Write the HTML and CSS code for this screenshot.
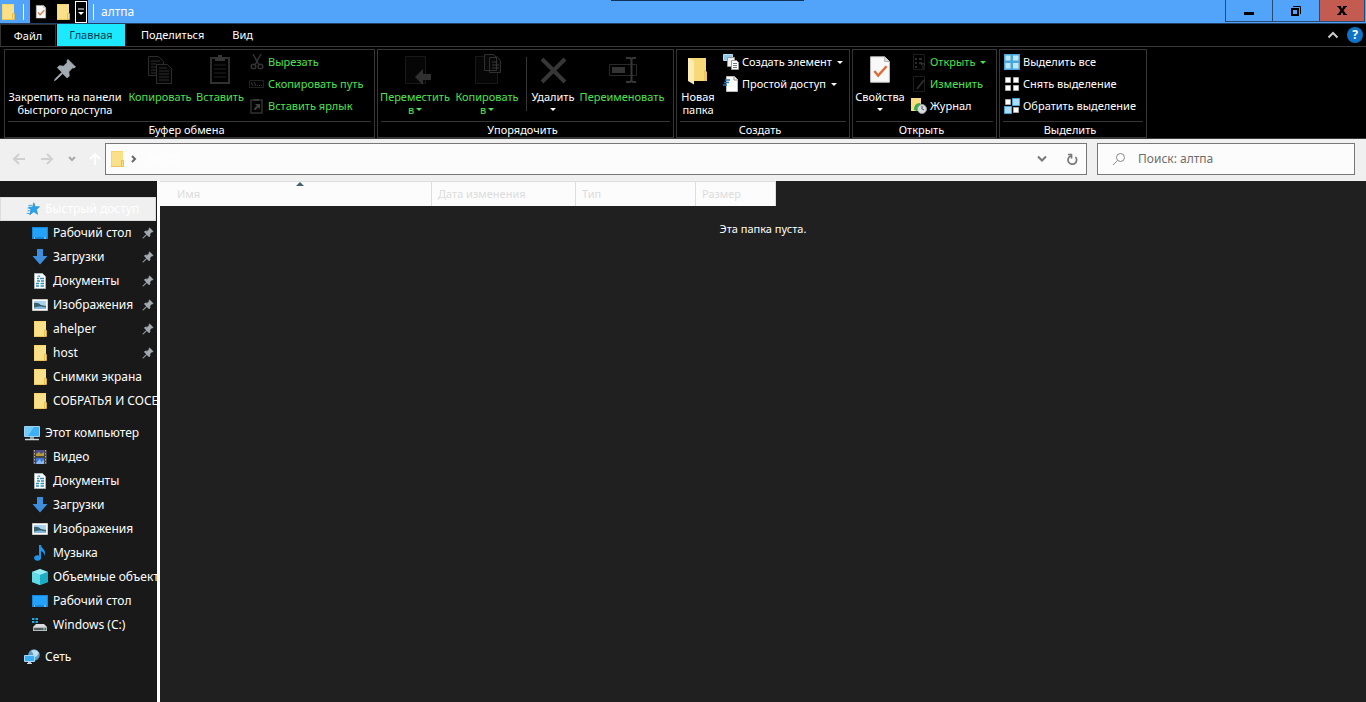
FILE: index.html
```html
<!DOCTYPE html>
<html lang="ru">
<head>
<meta charset="utf-8">
<title>алтпа</title>
<link rel="stylesheet" href="styles.css">
</head>
<body>
<svg class="sprite" aria-hidden="true">
  <symbol id="folder" viewBox="0 0 16 16"><path d="M2 0h12v15H2z" fill="#fbe08a"/><path d="M2 0h12v1H3v15H2z" fill="#f7d46c"/><path d="M12.500 9.500h2v6h-2z" fill="#fbe08a" stroke="#e0b53c" stroke-width=".8"/><path d="M2 15h11v1H2z" fill="#edc659"/></symbol>
  <symbol id="pin" viewBox="0 0 16 16"><path d="M10 1l5 5-1.300.700-.700-.200-2.500 2.700.300 2.800-1.300 1.300-3-3L2 14.500 1 15l.500-1L6 9.500l-3-3L4.300 5.200l2.700.300L9.500 3 9.300 2z" fill="#a3abb2" stroke="#a3abb2" stroke-width=".6"/></symbol>
  <symbol id="checkdoc" viewBox="-1 -1 26 34"><path d="M2 2h15l5 5v22H2z" fill="#f8f8f8" stroke="#c9c9c9"/><path d="M17 2v5h5" fill="#ddd" stroke="#a9a9a9"/><path d="M6 17l4 5 9-10" fill="none" stroke="#dc6b35" stroke-width="2.500"/></symbol>
  <symbol id="doc" viewBox="0 0 16 16"><path d="M2.500.500h8l3 3v12h-11z" fill="#fff" stroke="#a9b3b8"/><path d="M5 5.500h2M8 5.500h4M5 8h3M9 8h3M4 10.500h3M8.500 10.500H12M4 13h3M8.500 13H12" stroke="#2c8fc0" stroke-width="1.300"/><path d="M5.500 4L7 2.500 8 4" stroke="#2c8fc0" fill="none"/></symbol>
  <symbol id="down" viewBox="0 0 16 16"><path d="M5 0h6v7h4.500L8 15.500.500 7H5z" fill="#3d8fdd"/></symbol>
  <symbol id="desktop" viewBox="0 0 16 16"><path d="M0 2h16v12H0z" fill="#1588dd"/><path d="M1 3h14v9H1z" fill="#22a2fa"/><path d="M2 13h1M12 13h2" stroke="#bfe3ff"/></symbol>
  <symbol id="image" viewBox="0 0 16 16"><path d="M.500 2.500h15v11H.500z" fill="#fff" stroke="#c8c8c8"/><path d="M2 4h12v8H2z" fill="#a9d3ee"/><path d="M2 6q4-1 7 2l5 1v3H2z" fill="#33616e"/><path d="M2 10.500q6-2 12 0V12H2z" fill="#86b7d6"/></symbol>
  <symbol id="pc" viewBox="0 0 16 16"><path d="M.500 1.500h15v10H.500z" fill="#3fb0f2" stroke="#9fd2ee"/><path d="M1 2h9l-6 9H1z" fill="#70ccfa"/><path d="M6 12h4v2H6z" fill="#8b9ba5"/><path d="M1 14.500h14" stroke="#ccd5da" stroke-width="1.500"/></symbol>
  <symbol id="video" viewBox="0 0 16 16"><path d="M1 1h14v14H1z" fill="#444"/><path d="M2.500 1v14M13.500 1v14" stroke="#aaa" stroke-dasharray="1.500 1.500"/><path d="M4 1h8v6H4z" fill="#4e4d8a"/><path d="M4 5l3-2 2 2 3-2v4H4z" fill="#b89b39"/><path d="M4 9h8v6H4z" fill="#3c77d8"/><path d="M5 13l3-3 1 3 3-2v4H4z" fill="#8eb7ef"/></symbol>
  <symbol id="music" viewBox="0 0 16 16"><path d="M7 0h2c0 3 4 4 4 8 0 1-.500 2-1 3 .500-3-1-4-3-5v6.500A3.500 2.800 0 1 1 7 10.500z" fill="#2196e8"/></symbol>
  <symbol id="cube" viewBox="0 0 16 16"><path d="M8 0l8 3v10l-8 3-8-3V3z" fill="#2fc3d6"/><path d="M0 3l8-3 8 3-8 3z" fill="#9aeaf2"/><path d="M8 6l8-3v10l-8 3z" fill="#1badc4"/><path d="M0 3l8 3v10l-8-3z" fill="#62d9e6"/></symbol>
  <symbol id="drive" viewBox="0 0 16 16"><path d="M0 1h2.500v2H0zM3.500 1H6v2H3.500zM0 4h2.500v2H0zM3.500 4H6v2H3.500z" fill="#1ea7dc"/><path d="M4 7h8l3 3H1z" fill="#d9dde0"/><path d="M1 10h14v4H1z" fill="#b4bbc0"/><path d="M2 11h12v2H2z" fill="#555c60"/><path d="M11 12h2" stroke="#7cef7c"/></symbol>
  <symbol id="net" viewBox="0 0 16 16"><circle cx="10" cy="6" r="5.800" fill="#5b9cc5"/><path d="M7 2q3 2 2 5l3 1 3-4q-3-5-8-2" fill="#c3dfed"/><path d="M.500 6.500h10v6H.500z" fill="#39adf2" stroke="#a5d9f6"/><path d="M4.500 13h2v1.500h-2zM3 14.500h5" fill="#9ab" stroke="#cbd5da"/></symbol>
  <symbol id="star" viewBox="-1 -1 18 18"><path d="M10 1l1.600 4.500H16.500L13 8.700 14.300 14 10 11 5.500 14.500 7 9 4 6h4.500z" fill="#2ba3ec" stroke="#1b82c9" stroke-width=".7"/><path d="M4 4h4M3 7h4M3 10h4M2 13h4" stroke="#2ba3ec"/></symbol>
  <symbol id="copy" viewBox="0 0 32 32"><path d="M4.500 2.500h10l5 5v14h-15z" fill="#050505" stroke="#2c2c2c"/><path d="M7 7h9M7 10h5M7 13h5M7 16h5M7 19h5" stroke="#2c2c2c"/><path d="M12.500 10.500h11l4 4v15h-15z" fill="#050505" stroke="#2c2c2c"/><path d="M15 14h8M15 17h10M15 20h10M15 23h10M15 26h10" stroke="#2c2c2c"/></symbol>
  <symbol id="paste" viewBox="0 0 32 32"><path d="M7 4h18v25H7z" fill="none" stroke="#303030" stroke-width="2"/><path d="M11 3h3V1h4v2h3v4H11z" fill="#363636"/><path d="M10 11h12M10 15h12M10 19h12M10 23h12" stroke="#222"/></symbol>
  <symbol id="cut" viewBox="0 0 16 16"><path d="M4 0l6 11M12 0L6 11" stroke="#333" stroke-width="1.500"/><circle cx="4.500" cy="12.500" r="2.300" fill="none" stroke="#333" stroke-width="1.500"/><circle cx="11.500" cy="12.500" r="2.300" fill="none" stroke="#333" stroke-width="1.500"/></symbol>
  <symbol id="path" viewBox="0 0 16 16"><path d="M.500 4.500h14v7H.500z" fill="none" stroke="#222"/><path d="M2 6l2 4M5 6l2 4M8 9.500h1M10 9.500h1M12 9.500h1" stroke="#3a3a3a"/></symbol>
  <symbol id="shortcut" viewBox="0 0 16 16"><path d="M2 2h11v13H2z" fill="none" stroke="#303030" stroke-width="1.500"/><path d="M5 1h5v2H5z" fill="#383838"/><path d="M5 12q0-3 3-4L6 6h5v5L9.500 9.500Q7 10 7 12z" fill="#424242"/></symbol>
  <symbol id="move" viewBox="0 0 32 32"><path d="M6.500 2.500h20v27h-20z" fill="#060606" stroke="#191919"/><path d="M16 23l8-8v5h8v6h-8v5z" fill="#303030"/></symbol>
  <symbol id="copyto" viewBox="0 0 32 32"><path d="M4.500 2.500h22v27h-22z" fill="#060606" stroke="#191919"/><path d="M13.500.500h9l3 3v13h-12zM18.500 3.500h8l3 3v12h-11z" fill="#080808" stroke="#303030"/><path d="M21 8h5M21 11h7M21 14h7" stroke="#383838"/></symbol>
  <symbol id="cross" viewBox="0 0 32 32"><path d="M5 5l23 23M28 5L5 28" stroke="#373737" stroke-width="4"/></symbol>
  <symbol id="rename" viewBox="0 0 32 32"><path d="M3.500 10.500h27v11h-27z" fill="none" stroke="#292929"/><path d="M6 13h13v6H6z" fill="#333"/><path d="M20 4h4l1.500 1L27 4h3M25.500 5v22M20 28h4l1.500-1L27 28h3" fill="none" stroke="#383838" stroke-width="2"/></symbol>
  <symbol id="newfolder" viewBox="0 0 32 32"><path d="M6 4h18v14l1 1v8H10z" fill="#f8d978"/><path d="M6 4l6 3v23.500L6 27z" fill="#fdedb3"/><path d="M22 16h1l2 2v9h-3z" fill="#f0c75f"/></symbol>
  <symbol id="newitem" viewBox="0 0 16 16"><path d="M.500.500h9v6h-9z" fill="#8cc7ed" stroke="#b9def3"/><path d="M4.500 3.500h7v9h-7z" fill="#f0f0f0" stroke="#999"/><path d="M8.500 6.500h5l2 2v7h-7z" fill="#fff" stroke="#999"/><path d="M10 9.500h4M10 11.500h4M10 13.500h4" stroke="#777"/></symbol>
  <symbol id="easy" viewBox="0 0 16 16"><path d="M3.500.500h8l3 3v12h-11z" fill="#fff" stroke="#bbb"/><path d="M11 1v3h3" fill="none" stroke="#888"/><path d="M2 4h5M1 6.500h5M0 9h4" stroke="#2377bb" stroke-width="1.300"/></symbol>
  <symbol id="open" viewBox="0 0 16 16"><path d="M2.500.500h11v15h-11z" fill="none" stroke="#1d1d1d"/><path d="M4 4h2v2H4zM4 8h2v2H4zM4 12h2v2H4zM8 4h3v2H8zM8 8h3v2H8z" fill="#2c2c2c"/><path d="M12 15v-5M10 11l2-2 2 2" stroke="#333" fill="none"/></symbol>
  <symbol id="edit" viewBox="0 0 16 16"><path d="M2.500.500h11v15h-11z" fill="none" stroke="#1d1d1d"/><path d="M6 13l7-9" stroke="#2c2c2c" stroke-width="2"/></symbol>
  <symbol id="history" viewBox="0 0 16 16"><path d="M0 0h10v13H0z" fill="#f8dc81"/><path d="M3 12q0-7 6-7l1 2q-4 1-4 6z" fill="#35a84a"/><circle cx="11" cy="11" r="4.500" fill="#d7dde0" stroke="#8e999e"/><path d="M11 8v3l2 1" fill="none" stroke="#555"/></symbol>
  <symbol id="selall" viewBox="0 0 16 16"><path d="M0 0h16v16H0z" fill="#4aa5da"/><path d="M1.500 1.500h5v5h-5zM9 1.500h5.500v5H9zM1.500 9h5v5.500h-5zM9 9h5.500v5.500H9z" fill="#bfe7fc"/></symbol>
  <symbol id="selnone" viewBox="0 0 16 16"><path d="M1.500 1.500h5v5h-5zM9.500 1.500h5v5h-5zM1.500 9.500h5v5h-5zM9.500 9.500h5v5h-5z" fill="#fff" stroke="#aaa"/></symbol>
  <symbol id="selinv" viewBox="0 0 16 16"><path d="M1.500 1.500h5v5h-5zM9.500 9.500h5v5h-5z" fill="#fff" stroke="#aaa"/><path d="M8.500.500h7v7h-7zM.500 8.500h7v7h-7z" fill="#a9ddfb" stroke="#4aa5da"/></symbol>
</svg>

<div class="window">
  <header class="titlebar">
    <svg class="icon title-folder"><use href="#folder"/></svg>
    <span class="title-line"></span>
    <div class="quickbar">
      <button class="quick" aria-label="Свойства"><svg class="icon"><use href="#checkdoc"/></svg></button>
      <button class="quick" aria-label="Новая папка"><svg class="icon"><use href="#folder"/></svg></button>
      <button class="quick quick-more" aria-label="Настройка панели"><svg width="8" height="8" viewBox="0 0 8 8"><path d="M1 1h6" stroke="#fff"/><path d="M1 4h6L4 7z" fill="#fff"/></svg></button>
    </div>
    <span class="title-line"></span>
    <h1 class="title">алтпа</h1>
    <span class="title-strip"></span>
    <div class="caption-buttons">
      <button class="caption" aria-label="Свернуть"><svg width="12" height="12"><path d="M1 7h10v3H1z"/></svg></button>
      <button class="caption" aria-label="Восстановить"><svg width="12" height="12"><path d="M2 4h6v6H2z" fill="none" stroke="#000" stroke-width="2"/><path d="M3 1.500h7.500V9" fill="none" stroke="#000"/></svg></button>
      <button class="caption close" aria-label="Закрыть"><svg width="12" height="12"><path d="M1 1h4v1l1 2 1-2V1h4v1h-1L7.500 5.500 10 9h1v1H7V9L6 7 5 9v1H1V9h1l2.500-3.500L2 2H1z"/></svg></button>
    </div>
  </header>

  <nav class="tabs">
    <button class="tab tab-file">Файл</button>
    <button class="tab tab-active">Главная</button>
    <button class="tab">Поделиться</button>
    <button class="tab">Вид</button>
    <div class="tab-tools">
      <button class="tool" aria-label="Свернуть ленту"><svg width="12" height="8"><path d="M1.500 6.500L6 2l4.500 4.500" fill="none" stroke="#ccc" stroke-width="2"/></svg></button>
      <button class="tool help" aria-label="Справка">?</button>
    </div>
  </nav>

  <section class="ribbon">
    <div class="group group-clipboard">
      <div class="group-body">
        <button class="big w-pin"><svg class="icon-pin"><use href="#pin"/></svg><span>Закрепить на панели<br>быстрого доступа</span></button>
        <button class="big w-copy off"><svg><use href="#copy"/></svg><span>Копировать</span></button>
        <button class="big w-short off"><svg><use href="#paste"/></svg><span>Вставить</span></button>
        <div class="stack">
          <button class="small off"><svg class="icon"><use href="#cut"/></svg>Вырезать</button>
          <button class="small off"><svg class="icon"><use href="#path"/></svg>Скопировать путь</button>
          <button class="small off"><svg class="icon"><use href="#shortcut"/></svg>Вставить ярлык</button>
        </div>
      </div>
      <div class="group-name">Буфер обмена</div>
    </div>
    <div class="group group-organize">
      <div class="group-body">
        <button class="big w-move off"><svg><use href="#move"/></svg><span>Переместить<br>в<i class="arrow"></i></span></button>
        <button class="big w-copy off"><svg><use href="#copyto"/></svg><span>Копировать<br>в<i class="arrow"></i></span></button>
        <span class="divider"></span>
        <button class="big w-short"><svg><use href="#cross"/></svg><span>Удалить</span><i class="arrow arrow-below"></i></button>
        <button class="big w-rename off"><svg><use href="#rename"/></svg><span>Переименовать</span></button>
      </div>
      <div class="group-name">Упорядочить</div>
    </div>
    <div class="group group-create">
      <div class="group-body">
        <button class="big w-new"><svg><use href="#newfolder"/></svg><span>Новая<br>папка</span></button>
        <div class="stack">
          <button class="small"><svg class="icon"><use href="#newitem"/></svg>Создать элемент<i class="arrow"></i></button>
          <button class="small"><svg class="icon"><use href="#easy"/></svg>Простой доступ<i class="arrow"></i></button>
        </div>
      </div>
      <div class="group-name">Создать</div>
    </div>
    <div class="group group-open">
      <div class="group-body">
        <button class="big w-props"><svg><use href="#checkdoc"/></svg><span>Свойства</span><i class="arrow arrow-below"></i></button>
        <div class="stack">
          <button class="small off"><svg class="icon"><use href="#open"/></svg>Открыть<i class="arrow"></i></button>
          <button class="small off"><svg class="icon"><use href="#edit"/></svg>Изменить</button>
          <button class="small"><svg class="icon"><use href="#history"/></svg>Журнал</button>
        </div>
      </div>
      <div class="group-name">Открыть</div>
    </div>
    <div class="group group-select">
      <div class="group-body">
        <div class="stack">
          <button class="small"><svg class="icon"><use href="#selall"/></svg>Выделить все</button>
          <button class="small"><svg class="icon"><use href="#selnone"/></svg>Снять выделение</button>
          <button class="small"><svg class="icon"><use href="#selinv"/></svg>Обратить выделение</button>
        </div>
      </div>
      <div class="group-name">Выделить</div>
    </div>
  </section>

  <div class="navbar">
    <div class="nav-buttons">
      <button class="nav" aria-label="Назад"><svg width="14" height="12"><path d="M13 6H2M7 1L2 6l5 5" fill="none" stroke="#d0d0d0" stroke-width="2"/></svg></button>
      <button class="nav" aria-label="Вперед"><svg width="14" height="12"><path d="M1 6h11M7 1l5 5-5 5" fill="none" stroke="#d0d0d0" stroke-width="2"/></svg></button>
      <button class="nav nav-slim" aria-label="Последние"><svg width="8" height="6"><path d="M1 1l3 3 3-3" fill="none" stroke="#aaa" stroke-width="2"/></svg></button>
      <button class="nav nav-slim" aria-label="Вверх"><svg width="12" height="14"><path d="M6 13V2M1 7l5-5 5 5" fill="none" stroke="#fff" stroke-width="2"/></svg></button>
    </div>
    <div class="address">
      <svg class="icon"><use href="#folder"/></svg>
      <svg width="6" height="8"><path d="M1 1l3 3-3 3" fill="none" stroke="#666" stroke-width="2"/></svg>
      <span class="crumb">алтпа</span>
      <button class="nav" aria-label="История"><svg width="12" height="8"><path d="M2 1.500l4 4 4-4" fill="none" stroke="#777" stroke-width="2"/></svg></button>
      <button class="nav" aria-label="Обновить"><svg width="12" height="12" viewBox="0 0 12 12"><path d="M9.500 4A4.300 4.300 0 1 1 4.500 3M2 1.500h4M5.500 1v4.500" fill="none" stroke="#777" stroke-width="1.700"/></svg></button>
    </div>
    <label class="search">
      <svg width="14" height="14"><circle cx="8.500" cy="5.500" r="4" fill="none" stroke="#888"/><path d="M5.500 8.500L1 13" stroke="#888"/></svg>
      <input type="text" placeholder="Поиск: алтпа" aria-label="Поиск">
    </label>
  </div>

  <div class="content">
    <aside class="sidebar">
      <a class="row root selected" href="#"><svg class="icon"><use href="#star"/></svg><span>Быстрый доступ</span></a>
      <a class="row" href="#"><svg class="icon"><use href="#desktop"/></svg><span>Рабочий стол</span><svg class="pinned"><use href="#pin"/></svg></a>
      <a class="row" href="#"><svg class="icon"><use href="#down"/></svg><span>Загрузки</span><svg class="pinned"><use href="#pin"/></svg></a>
      <a class="row" href="#"><svg class="icon"><use href="#doc"/></svg><span>Документы</span><svg class="pinned"><use href="#pin"/></svg></a>
      <a class="row" href="#"><svg class="icon"><use href="#image"/></svg><span>Изображения</span><svg class="pinned"><use href="#pin"/></svg></a>
      <a class="row" href="#"><svg class="icon"><use href="#folder"/></svg><span>ahelper</span><svg class="pinned"><use href="#pin"/></svg></a>
      <a class="row" href="#"><svg class="icon"><use href="#folder"/></svg><span>host</span><svg class="pinned"><use href="#pin"/></svg></a>
      <a class="row" href="#"><svg class="icon"><use href="#folder"/></svg><span>Снимки экрана</span></a>
      <a class="row" href="#"><svg class="icon"><use href="#folder"/></svg><span>СОБРАТЬЯ И СОСЕ</span></a>
      <a class="row root spaced" href="#"><svg class="icon"><use href="#pc"/></svg><span>Этот компьютер</span></a>
      <a class="row" href="#"><svg class="icon"><use href="#video"/></svg><span>Видео</span></a>
      <a class="row" href="#"><svg class="icon"><use href="#doc"/></svg><span>Документы</span></a>
      <a class="row" href="#"><svg class="icon"><use href="#down"/></svg><span>Загрузки</span></a>
      <a class="row" href="#"><svg class="icon"><use href="#image"/></svg><span>Изображения</span></a>
      <a class="row" href="#"><svg class="icon"><use href="#music"/></svg><span>Музыка</span></a>
      <a class="row" href="#"><svg class="icon"><use href="#cube"/></svg><span>Объемные объекты</span></a>
      <a class="row" href="#"><svg class="icon"><use href="#desktop"/></svg><span>Рабочий стол</span></a>
      <a class="row" href="#"><svg class="icon"><use href="#drive"/></svg><span>Windows (C:)</span></a>
      <a class="row root spaced" href="#"><svg class="icon"><use href="#net"/></svg><span>Сеть</span></a>
    </aside>
    <main class="files">
      <table class="columns">
        <thead><tr><th class="col-name">Имя<i class="sort"></i></th><th class="col-date">Дата изменения</th><th class="col-type">Тип</th><th class="col-size">Размер</th></tr></thead>
      </table>
      <p class="empty">Эта папка пуста.</p>
    </main>
  </div>
</div>
</body>
</html>
```
FILE: styles.css
```css
* { box-sizing: border-box; }
body { margin: 0; background: #202020; }
body, button, input { font: 12px/16px "Noto Sans", "Open Sans", sans-serif; color: #fff; }
button { margin: 0; padding: 0; border: 0; background: none; }
svg { display: block; flex: none; }
.sprite { display: none; }
.icon { width: 16px; height: 16px; }
.window { display: flex; flex-direction: column; height: 100vh; overflow: hidden; }

.titlebar { position: relative; display: flex; align-items: center; flex: none; height: 24px; background: #52a3fa; border-bottom: 1px solid #223f66; }
.title-folder { margin-right: 7px; }
.title-line { width: 1px; height: 16px; background: #fff; }
.quickbar { display: flex; align-items: center; height: 23px; margin: 0 5px 0 6px; background: #000; }
.quick { display: grid; place-items: center; width: 22px; height: 22px; }
.quick-more { width: 12px; border: 1px solid #fff; margin: 0 1px; }
.title { margin: 0 0 0 7px; font-size: 12px; font-weight: 400; }
.title-strip { position: absolute; top: 0; left: calc(50% - 72px); width: 193px; height: 1px; background: #12305c; }
.caption-buttons { display: flex; align-self: flex-start; margin: 0 1px 0 auto; border: 1px solid #274a73; border-top: 0; }
.caption { display: grid; place-items: center; width: 47px; height: 21px; border-right: 1px solid #274a73; }
.close { width: 44px; border: 0; background: #c45b51; }

.tabs { display: flex; flex: none; height: 23px; background: #000; border-bottom: 1px solid #383838; }
.tab { padding: 0 16px; font-size: 11px; }
.tab-file { width: 56px; margin-right: 1px; padding: 0; border: 1px solid #333; border-bottom: 0; }
.tab-active { width: 68px; padding: 0; background: #1ce8ff; color: #073b55; }
.tab:nth-child(4) { padding-left: 12px; }
.tab-tools { display: flex; align-items: center; gap: 8px; margin: 0 3px 0 auto; }
.tool { display: grid; place-items: center; }
.help { width: 16px; height: 16px; border-radius: 50%; background: #0f73c8; font-weight: 700; }

.ribbon { display: flex; flex: none; gap: 2px; padding: 2px 4px 0; background: #000; border-bottom: 1px solid #383838; font-size: 11px; }
.group { display: flex; flex-direction: column; flex: none; border: 1px solid #363636; }
.group-clipboard { width: 371px; }
.group-organize { width: 297px; }
.group-create { width: 174px; }
.group-open { width: 145px; }
.group-select { width: 148px; }
.group-body { display: flex; height: 71px; padding-top: 1px; }
.group-name { margin: 0 3px; padding-right: 6px; border-top: 1px solid #363636; text-align: center; line-height: 15px; }
.big { display: flex; flex-direction: column; align-items: center; flex: none; padding-top: 3px; font-size: 11px; line-height: 13px; white-space: nowrap; }
.big > svg { width: 32px; height: 32px; margin-bottom: 4px; }
.big > .icon-pin { width: 24px; height: 24px; margin: 4px 0 8px; }
.w-pin { width: 120px; }
.w-copy { width: 70px; }
.w-short { width: 50px; }
.w-move { width: 74px; }
.w-rename { width: 88px; }
.w-new { width: 42px; }
.w-props { width: 54px; }
.off { color: #4fe04f; }
.stack { display: flex; flex-direction: column; align-items: flex-start; padding-left: 4px; }
.small { display: flex; align-items: center; gap: 3px; height: 22px; font-size: 11px; white-space: nowrap; }
.arrow { display: inline-block; border: 3px solid transparent; border-top-color: currentColor; border-bottom: 0; margin-left: 2px; vertical-align: 3px; }
.arrow-below { margin: 5px 0 0; }
.divider { width: 1px; height: 54px; margin: 6px 1px 0 4px; background: #363636; }

.navbar { display: flex; align-items: center; gap: 10px; flex: none; height: 42px; padding: 0 11px 2px; background: #f0f0f0; }
.nav-buttons { display: flex; align-items: center; gap: 12px; margin-right: -10px; padding-right: 6px; }
.nav { display: grid; place-items: center; width: 16px; height: 20px; }
.nav-slim { width: 10px; }
.address { display: flex; align-items: center; flex: 1; gap: 6px; height: 32px; padding: 0 6px 0 3px; background: #fcfcfc; border: 1px solid #777; }
.crumb { flex: 1; padding-left: 4px; color: #fff; }
.address .nav { margin-left: 8px; }
.search { display: flex; align-items: center; gap: 12px; width: 258px; height: 32px; padding: 0 14px; background: #fcfcfc; border: 1px solid #777; }
.search input { flex: 1; min-width: 0; padding: 0; border: 0; outline: 0; background: none; color: #666; }
.search input::placeholder { color: #6d6d6d; opacity: 1; }

.content { display: flex; flex: 1; min-height: 0; }
.sidebar { width: 160px; flex: none; padding-top: 16px; overflow: hidden; background: #191919; border-right: 3px solid #fff; }
.row { display: flex; align-items: center; gap: 5px; height: 24px; padding: 0 3px 0 32px; color: #fff; text-decoration: none; white-space: nowrap; overflow: hidden; }
.row span { flex: 1; }
.root { padding-left: 24px; }
.selected { margin-right: 1px; background: #f0f0f0; border: 1px solid #ddd; padding-left: 23px; }
.spaced { margin-top: 8px; }
.pinned { width: 12px; height: 12px; }
.files { flex: 1; min-width: 0; background: #202020; }
.columns { table-layout: fixed; width: 616px; height: 25px; border-collapse: separate; border-spacing: 0; background: #fcfcfc; }
.columns th { position: relative; padding: 0 6px; border-top: 1px solid #dedede; border-right: 1px solid #dedede; color: #dcdcdc; font-size: 11px; font-weight: 400; text-align: left; }
.columns .col-name { width: 272px; padding-left: 17px; }
.col-date { width: 144px; }
.col-type { width: 120px; }
.col-size { width: 80px; }
.sort { position: absolute; top: 0; left: 50%; border: 4px solid transparent; border-top: 0; border-bottom-color: #45606c; }
.empty { margin: 15px 0; font-size: 11px; text-align: center; }
```
